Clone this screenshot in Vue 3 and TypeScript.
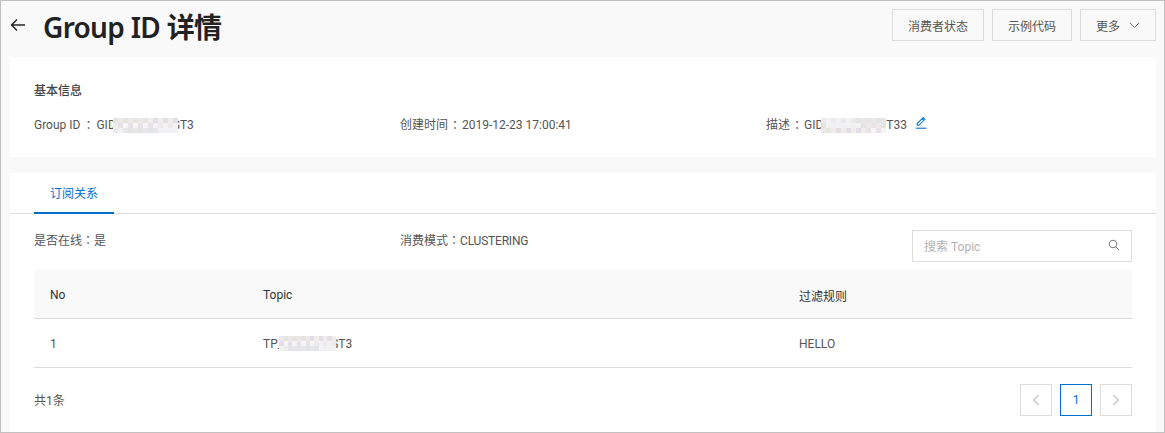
<script setup lang="ts">
const palette = ['#f3f2f3', '#e6e3e8', '#eeeeea', '#e4e5de', '#f3f2f3', '#e1e5e3', '#eceaec', '#f5f5f5', '#e5dee6', '#ece8ec', '#f1f0f2', '#e9e6ea']
function cells(seed: number): string[] {
  const out: string[] = []
  for (let i = 0; i < 39; i++) out.push(palette[(i * 5 + seed * 3 + (i % 7)) % palette.length])
  return out
}
const swatchesA = cells(1)
const swatchesB = cells(2)
const swatchesC = cells(3)
</script>

<template>
  <div class="frame">
    <header class="head">
      <div class="head-left">
        <svg class="back" width="16" height="14" viewBox="0 0 16 14" fill="none" stroke="#222" stroke-width="1.4">
          <path d="M15 7H1.5M7 1.5L1.5 7 7 12.5" />
        </svg>
        <h1 class="title">Group ID 详情</h1>
      </div>
      <div class="actions">
        <button class="btn b1">消费者状态</button>
        <button class="btn b2">示例代码</button>
        <button class="btn b3">
          更多
          <svg width="11" height="7" viewBox="0 0 11 7" fill="none" stroke="#666" stroke-width="1">
            <path d="M1 1l4.5 4.5L10 1" />
          </svg>
        </button>
      </div>
    </header>

    <section class="card info">
      <h2 class="section-title">基本信息</h2>
      <div class="info-grid">
        <div class="info-item">
          <span>Group ID</span><span class="colon wide">：</span><span>GID</span>
          <span class="mosaic w-a"><i v-for="(c, i) in swatchesA" :key="i" :style="{ background: c }"></i></span><span class="tail">ST3</span>
        </div>
        <div class="info-item"><span>创建时间</span><span class="colon">：</span><span>2019-12-23 17:00:41</span></div>
        <div class="info-item">
          <span>描述</span><span class="colon">：</span><span>GID</span>
          <span class="mosaic w-b"><i v-for="(c, i) in swatchesB" :key="i" :style="{ background: c }"></i></span><span>T33</span>
          <svg class="edit" width="12" height="12" viewBox="0 0 12 12" fill="none" stroke="#0070cc" stroke-width="1.1">
            <path d="M2.2 8.2L8.2 2.2l1.7 1.7-6 6H2.2zM7.2 3.2l1.7 1.7" transform="translate(0 -1.6)" />
            <path d="M.8 11.2h10.6" />
          </svg>
        </div>
      </div>
    </section>

    <section class="card detail">
      <nav class="tabs"><div class="tab">订阅关系</div></nav>
      <div class="meta">
        <div class="meta-item">是否在线<span class="colon narrow">：</span>是</div>
        <div class="meta-item">消费模式<span class="colon narrow">：</span><span class="tight">CLUSTERING</span></div>
        <div class="search">
          <span class="placeholder">搜索 Topic</span>
          <svg width="12" height="12" viewBox="0 0 12 12" fill="none" stroke="#777" stroke-width="1">
            <circle cx="5" cy="5" r="3.8" />
            <path d="M7.8 7.8L11 11" />
          </svg>
        </div>
      </div>
      <table class="table">
        <colgroup>
          <col class="c1" />
          <col class="c2" />
          <col class="c3" />
        </colgroup>
        <thead>
          <tr><th>No</th><th>Topic</th><th>过滤规则</th></tr>
        </thead>
        <tbody>
          <tr>
            <td>1</td>
            <td>
              <div class="topic">
                <span>TP_</span><span class="mosaic w-c"><i v-for="(c, i) in swatchesC" :key="i" :style="{ background: c }"></i></span><span class="tail">ST3</span>
              </div>
            </td>
            <td>HELLO</td>
          </tr>
        </tbody>
      </table>
      <footer class="foot">
        <span>共1条</span>
        <div class="pager">
          <button class="page">
            <svg width="8" height="12" viewBox="0 0 8 12" fill="none" stroke="#c4c4c4" stroke-width="1.1"><path d="M7 1L1.5 6 7 11" /></svg>
          </button>
          <button class="page current">1</button>
          <button class="page">
            <svg width="8" height="12" viewBox="0 0 8 12" fill="none" stroke="#c4c4c4" stroke-width="1.1"><path d="M1 1l5.5 5L1 11" /></svg>
          </button>
        </div>
      </footer>
    </section>
  </div>
</template>

<style>
html, body { margin: 0; padding: 0; background: #fff; }
</style>

<style scoped>
* { box-sizing: border-box; }
.frame {
  width: 1165px;
  height: 433px;
  border: 1px solid #c0c0c0;
  background: #f9f9f9;
  padding: 0 8px 0 9px;
  font-family: Roboto, "Noto Sans CJK SC", sans-serif;
  font-size: 12px;
  color: #555;
  overflow: hidden;
  display: flex;
  flex-direction: column;
}
.head {
  height: 56px;
  margin-left: -9px;
  display: flex;
  justify-content: space-between;
  align-items: flex-start;
}
.head-left { display: flex; align-items: center; height: 54px; }
.back { margin-left: 9px; margin-bottom: 6px; }
.title {
  margin: 0 0 2px 17px;
  font-family: "Noto Sans", "Noto Sans CJK SC", sans-serif;
  font-size: 28px;
  font-weight: 600;
  letter-spacing: -0.7px;
  color: #222;
  line-height: 52px;
}
.actions { display: flex; gap: 8px; padding-top: 8px; }
.btn {
  height: 32px;
  background: #f9f9f9;
  border: 1px solid #dcdcdc;
  font: inherit;
  color: #555;
  padding: 0;
  display: flex;
  align-items: center;
  justify-content: center;
}
.b1 { width: 92px; }
.b2 { width: 80px; }
.b3 { width: 76px; gap: 9px; }
.card { background: #fff; }
.info { height: 100px; padding: 25px 24px 0; }
.section-title {
  margin: 0 0 16px;
  font-size: 12px;
  line-height: 18px;
  font-weight: 500;
  color: #444;
}
.info-grid { display: grid; grid-template-columns: repeat(3, 366px); }
.info-item { display: flex; align-items: center; line-height: 18px; white-space: nowrap; }
.colon {
  display: inline-block;
  width: 14px;
  font-family: "Noto Sans CJK TC", sans-serif;
  text-align: center;
}
.wide { width: 16px; }
.narrow { width: 12px; }
.tight { letter-spacing: -0.2px; }
.mosaic {
  display: inline-grid;
  grid-template-columns: repeat(13, 5px);
  grid-auto-rows: 5px;
  height: 15px;
  flex: none;
  position: relative;
  z-index: 1;
}
.mosaic i { display: block; }
.w-a { margin-left: -3px; }
.w-b { margin-left: -2px; }
.w-c { margin-left: -4px; grid-template-columns: repeat(13, 4.4px); }
.tail { margin-left: -5px; }
.edit { margin-left: 8px; margin-bottom: 4px; }
.detail { margin-top: 16px; flex: 1; }
.tabs { height: 41px; border-bottom: 1px solid #dcdcdc; padding-left: 24px; }
.tab {
  width: 80px;
  height: 41px;
  line-height: 42px;
  text-align: center;
  color: #0070cc;
  border-bottom: 2px solid #0070cc;
}
.meta {
  display: grid;
  grid-template-columns: 366px 1fr 220px;
  padding: 0 24px;
  height: 56px;
  align-items: start;
}
.meta-item { padding-top: 17px; line-height: 18px; }
.search {
  margin-top: 16px;
  height: 32px;
  border: 1px solid #dcdcdc;
  display: flex;
  align-items: center;
  justify-content: space-between;
  padding: 0 11px 2px 11px;
}
.placeholder { color: #b3b3b3; }
.table {
  width: 1098px;
  margin-left: 24px;
  border-collapse: collapse;
  table-layout: fixed;
}
.c1 { width: 213px; }
.c2 { width: 536px; }
.c3 { width: 349px; }
th {
  height: 48px;
  background: #f9f9f9;
  border-bottom: 1px solid #dcdcdc;
  text-align: left;
  padding: 3px 16px 0;
  font-weight: 400;
  color: #333;
}
td {
  height: 49px;
  border-bottom: 1px solid #dcdcdc;
  padding: 2px 16px 0;
  color: #555;
}
.topic { display: flex; align-items: center; white-space: nowrap; }
.foot {
  display: flex;
  justify-content: space-between;
  align-items: center;
  margin: 16px 24px 0;
  height: 32px;
}
.pager { display: flex; gap: 8px; }
.page {
  width: 32px;
  height: 32px;
  border: 1px solid #dcdcdc;
  background: #fff;
  padding: 0;
  font: inherit;
  color: #0070cc;
  display: flex;
  align-items: center;
  justify-content: center;
}
.current { border-color: #0070cc; }
</style>
